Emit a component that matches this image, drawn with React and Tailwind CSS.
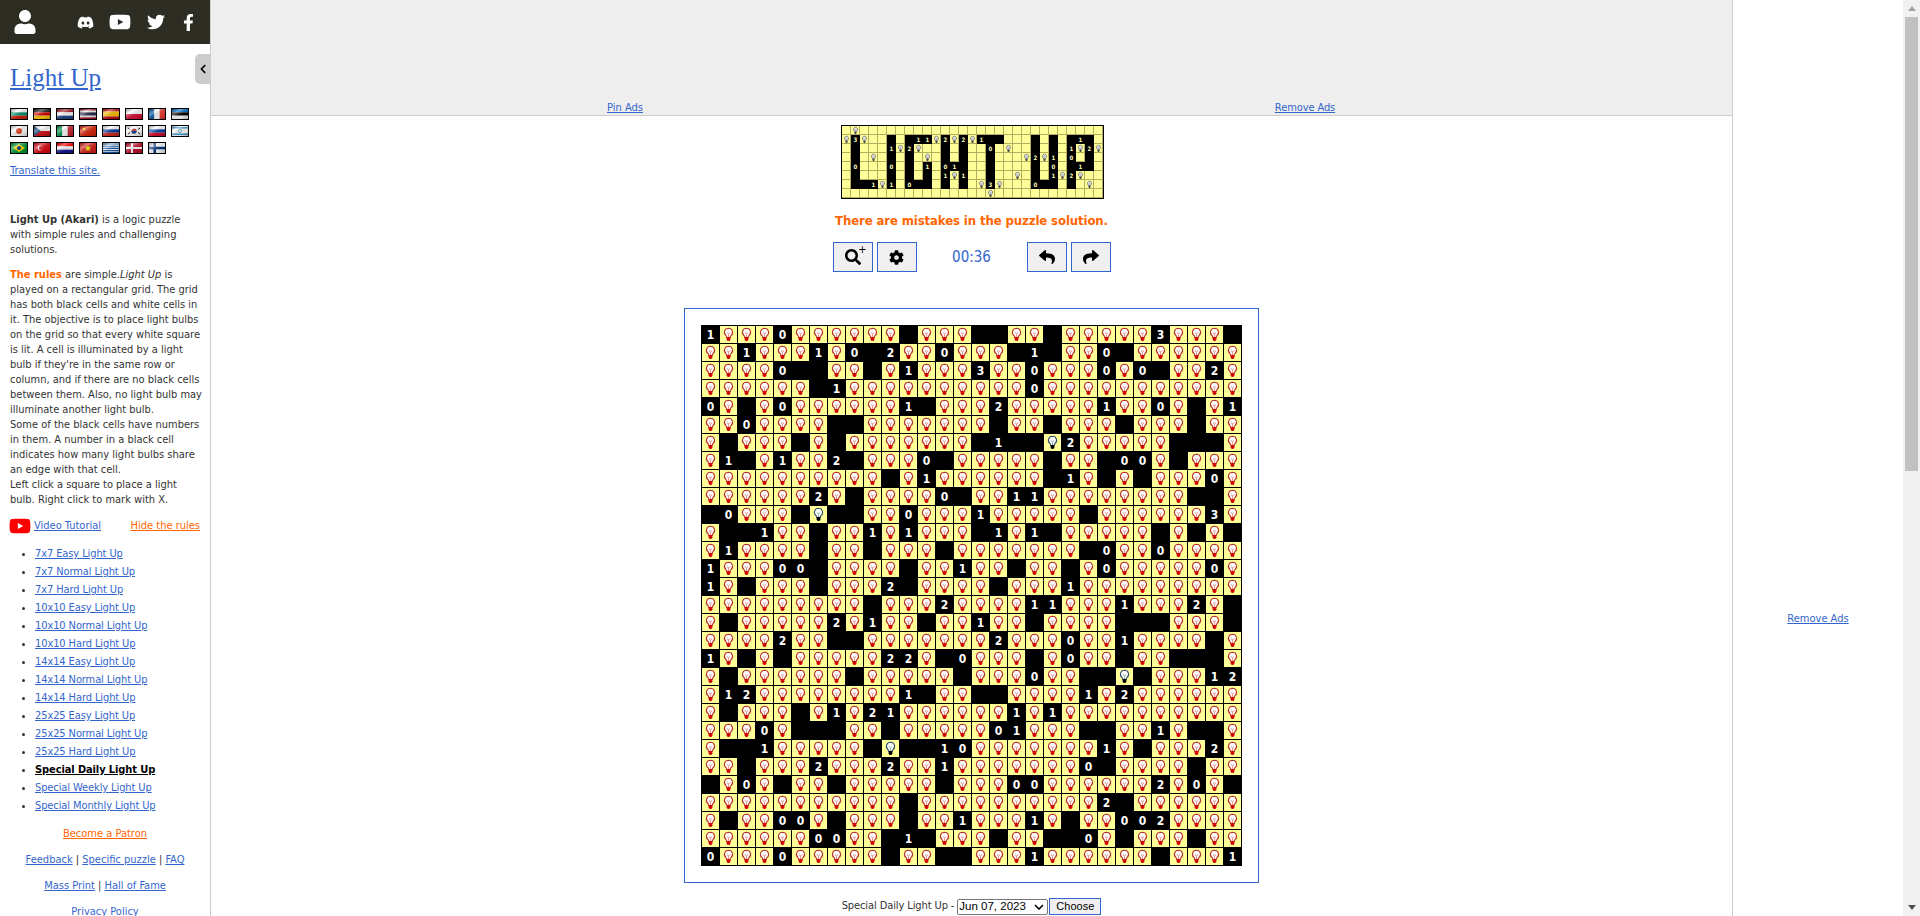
import { FaUser, FaDiscord, FaYoutube, FaTwitter, FaFacebookF, FaChevronLeft, FaSearch, FaCog, FaReply, FaShare } from 'react-icons/fa';

const board = [
  '1...0......#...##..#.....3...#',
  '..1...1.0#2..0...#1#..0#......',
  '....0##..#.1...3..0...0.0#..2.',
  '......#1..........0...........',
  '0.#.0......1#...2.....1..0.#.1',
  '..0....##.......#..#...#...#..',
  '.#...#.#.......#1##o2.....###.',
  '.1#.1..2#...0#.....#..#00.#...',
  '..........#.1......#1.#.#...0.',
  '......2.#....0#..11........##.',
  '#0...#o##..0...1.....#......3.',
  '.##1..#..1.1...#1.1#.....#.#.#',
  '.1....#..#...#.......#0..0....',
  '1...00#....#..1..#..#.0.....0.',
  '1.#...#...2#....#...1.........',
  '.........#...2....11...1...2.#',
  '.#.....2.1..#..1..#....###...#',
  '....2..##.......2...0..1....#.',
  '1.#.#.....22.#0...#.0..#..###.',
  '.#......#.....#...0..##o#...12',
  '.12........1#..##....1.2......',
  '.#...#.1.21......1.1..........',
  '...0.###..#.....01...##..1.##.',
  '.##1.....#o##10.......1.#...2.',
  '..#...2...2..1.......0#....#..',
  '#.0.#..#.....#...00......2.0.#',
  '...........#..........2#......',
  '.#..00.#...#..1...1.#..002....',
  '......00..#1#...#..##0.#...#..',
  '0...0.....#..##...1......#...1',
];

const logo = [
  '.b...........................',
  'b3b..#.#11b2b2b1##...#.#.#1#.',
  '.#...1b2b..#.#..0.b..#.#.1b2b',
  '.#.b.#.#.b.#.#..#...b2b1.0.#.',
  '.0...0.#.1.01#..#....#.0.#1#.',
  '.#...#.#.#.1b1..#..b.#.1b2b..',
  '.##1b1.0##.#.#.b3b...0##.#.b.',
  '................b............',
];

const levels = [
  '7x7 Easy Light Up', '7x7 Normal Light Up', '7x7 Hard Light Up',
  '10x10 Easy Light Up', '10x10 Normal Light Up', '10x10 Hard Light Up',
  '14x14 Easy Light Up', '14x14 Normal Light Up', '14x14 Hard Light Up',
  '25x25 Easy Light Up', '25x25 Normal Light Up', '25x25 Hard Light Up',
  'Special Daily Light Up', 'Special Weekly Light Up', 'Special Monthly Light Up',
];

function Bulb({ outline = '#b8352d', base = '#d00808', filament = '#e08a7c', fill = '#fff', size = 17 }) {
  return (
    <svg width={size} height={size} viewBox="0 0 17 17" className="block">
      <path d="M8.5 2.3a4.1 4.1 0 0 0-2.4 7.4c.5.4.7 1 .7 1.8h3.4c0-.8.2-1.4.7-1.8a4.1 4.1 0 0 0-2.4-7.4z" fill={fill} stroke={outline} strokeWidth="1.1" />
      <path d="M7.2 6.3l1.3 2.2 1.3-2.2M8.5 8.5v3" fill="none" stroke={filament} strokeWidth=".9" />
      <path d="M6.6 11h3.8v2.6l-1 1.4H7.6l-1-1.4z" fill={base} />
    </svg>
  );
}

function Cell({ value }) {
  if (value === '.') {
    return <div className="h-[17px] w-[17px] bg-[#ffff99]"><Bulb /></div>;
  }
  if (value === 'o') {
    return <div className="h-[17px] w-[17px] bg-[#ffff99]"><Bulb outline="#35506b" base="#000" filament="#8aa" /></div>;
  }
  return (
    <div className="flex h-[17px] w-[17px] items-center justify-center bg-black text-[12px] font-bold leading-none text-white">
      {value === '#' ? '' : value}
    </div>
  );
}

function LogoCell({ value }) {
  if (value === '.' || value === 'b') {
    return (
      <div className="h-[9px] w-[9px] border-r border-b border-[#b5ae5e] bg-[#ffff99]">
        {value === 'b' ? <Bulb outline="#555" base="#444" filament="#999" fill="#ddd" size={9} /> : null}
      </div>
    );
  }
  return (
    <div className="flex h-[9px] w-[9px] items-center justify-center bg-black text-[6px] font-bold leading-none text-[#ffffc0]">
      {value === '#' ? '' : value}
    </div>
  );
}

const flags = [
  ['h', '#fff', '#00966e', '#d62612'],
  ['h', '#222', '#d00', '#fc0'],
  ['h', '#ae1c28', '#fff', '#21468b'],
  ['h', '#a51931', '#f4f5f8', '#2d2a4a', '#2d2a4a', '#f4f5f8', '#a51931'],
  ['h', '#c60b1e', '#ffc400', '#ffc400', '#c60b1e'],
  ['h', '#fff', '#dc143c'],
  ['v', '#0055a4', '#fff', '#ef4135'],
  ['h', '#0072ce', '#000', '#fff'],
  ['jp'],
  ['cz'],
  ['v', '#009246', '#fff', '#ce2b37'],
  ['cn'],
  ['h', '#fff', '#0039a6', '#d52b1e'],
  ['kr'],
  ['h', '#fff', '#0047ab', '#d80f2e'],
  ['il'],
  ['br'],
  ['tr'],
  ['h', '#ff0000', '#fff', '#171796'],
  ['vn'],
  ['gr'],
  ['dk'],
  ['fi'],
];

function Flag({ spec, id }) {
  const [kind, ...colors] = spec;
  return (
    <svg width="18" height="12" viewBox="0 0 16 10" preserveAspectRatio="none" className="block border border-black">
      <defs>
        <linearGradient id={`gloss${id}`} x1="0" x2="1" y1="0" y2="1">
          <stop offset="0" stopColor="#000" stopOpacity=".35" />
          <stop offset=".3" stopColor="#fff" stopOpacity=".4" />
          <stop offset=".65" stopColor="#000" stopOpacity=".1" />
          <stop offset="1" stopColor="#000" stopOpacity=".3" />
        </linearGradient>
      </defs>
      {kind === 'h' && colors.map((c, i) => (
        <rect key={i} x="0" y={(10 / colors.length) * i} width="16" height={10 / colors.length} fill={c} />
      ))}
      {kind === 'v' && colors.map((c, i) => (
        <rect key={i} x={(16 / colors.length) * i} y="0" width={16 / colors.length} height="10" fill={c} />
      ))}
      {kind === 'jp' && <><rect width="16" height="10" fill="#fff" /><circle cx="8" cy="5" r="3" fill="#e8401c" /></>}
      {kind === 'cz' && <><rect width="16" height="5" fill="#fff" /><rect y="5" width="16" height="5" fill="#d7141a" /><path d="M0 0l7 5-7 5z" fill="#11457e" /></>}
      {kind === 'cn' && <><rect width="16" height="10" fill="#de2910" /><circle cx="4" cy="3" r="1.3" fill="#ffde00" /></>}
      {kind === 'kr' && <><rect width="16" height="10" fill="#fff" /><circle cx="8" cy="5" r="2.6" fill="#cd2e3a" /><path d="M5.4 5a2.6 2.6 0 0 0 5.2 0z" fill="#0047a0" /><path d="M2 2l2 1.5M2 8l2-1.5M14 2l-2 1.5M14 8l-2-1.5" stroke="#222" strokeWidth="1" /></>}
      {kind === 'il' && <><rect width="16" height="10" fill="#fff" /><rect y="1" width="16" height="1.5" fill="#38a0d8" /><rect y="7.5" width="16" height="1.5" fill="#38a0d8" /><circle cx="8" cy="5" r="1.6" fill="none" stroke="#38a0d8" strokeWidth=".7" /></>}
      {kind === 'br' && <><rect width="16" height="10" fill="#009c3b" /><path d="M8 1l6 4-6 4-6-4z" fill="#ffdf00" /><circle cx="8" cy="5" r="2" fill="#002776" /></>}
      {kind === 'tr' && <><rect width="16" height="10" fill="#e30a17" /><circle cx="6" cy="5" r="2.5" fill="#fff" /><circle cx="6.8" cy="5" r="2" fill="#e30a17" /></>}
      {kind === 'vn' && <><rect width="16" height="10" fill="#da251d" /><path d="M8 2l.9 2.3h2.4l-1.9 1.5.7 2.4L8 6.8 5.9 8.2l.7-2.4-1.9-1.5h2.4z" fill="#ff0" /></>}
      {kind === 'gr' && <><rect width="16" height="10" fill="#fff" /><path d="M0 1h16M0 3.2h16M0 5.4h16M0 7.6h16M0 9.6h16" stroke="#0d5eaf" strokeWidth="1.1" /></>}
      {kind === 'dk' && <><rect width="16" height="10" fill="#c8102e" /><rect x="5" width="2" height="10" fill="#fff" /><rect y="4" width="16" height="2" fill="#fff" /></>}
      {kind === 'fi' && <><rect width="16" height="10" fill="#fff" /><rect x="4.5" width="2.5" height="10" fill="#003580" /><rect y="3.8" width="16" height="2.5" fill="#003580" /></>}
      <rect width="16" height="10" fill={`url(#gloss${id})`} />
    </svg>
  );
}

function ToolButton({ children }) {
  return (
    <button type="button" className="flex h-[30px] w-[40px] items-center justify-center border border-[#3366cc] bg-[#f0f0f0] text-black">
      {children}
    </button>
  );
}

function Sidebar() {
  return (
    <aside className="relative w-[211px] shrink-0 border-r border-[#ccc] text-[11px] leading-[15px] text-[#333]">
      <div className="flex h-[44px] items-center bg-[#2e2d24] pl-[13px] text-white">
        <FaUser size={24} />
        <FaDiscord size={17} className="ml-[40px]" />
        <FaYoutube size={22} className="ml-[15px]" />
        <FaTwitter size={18} className="ml-[16px]" />
        <FaFacebookF size={17} className="ml-[15px]" />
      </div>
      <div className="absolute top-[54px] right-0 flex h-[30px] w-[15px] items-center justify-center rounded-l-[5px] bg-[#ccc] text-black">
        <FaChevronLeft size={10} />
      </div>
      <div className="whitespace-nowrap px-[10px]">
        <h1 className="mt-[18px] font-['Liberation_Serif',serif] text-[25px] leading-[32px] text-[#3366cc] underline">Light Up</h1>
        <div className="mt-[14px] grid grid-cols-[repeat(8,18px)] gap-x-[5px] gap-y-[5px]">
          {flags.map((spec, index) => <Flag key={index} spec={spec} id={index} />)}
        </div>
        <a href="#" className="mt-[9px] inline-block text-[#3366cc] underline">Translate this site.</a>
        <p className="mt-[34px]">
          <b>Light Up (Akari)</b> is a logic puzzle<br />
          with simple rules and challenging<br />
          solutions.
        </p>
        <p className="mt-[10px]">
          <b className="text-[#ff6600]">The rules</b> are simple.<i>Light Up</i> is<br />
          played on a rectangular grid. The grid<br />
          has both black cells and white cells in<br />
          it. The objective is to place light bulbs<br />
          on the grid so that every white square<br />
          is lit. A cell is illuminated by a light<br />
          bulb if they're in the same row or<br />
          column, and if there are no black cells<br />
          between them. Also, no light bulb may<br />
          illuminate another light bulb.<br />
          Some of the black cells have numbers<br />
          in them. A number in a black cell<br />
          indicates how many light bulbs share<br />
          an edge with that cell.<br />
          Left click a square to place a light<br />
          bulb. Right click to mark with X.
        </p>
        <div className="mt-[11px] flex items-center justify-between">
          <span className="flex items-center">
            <FaYoutube size={22} className="-my-1 -ml-[1px] text-[#f00]" />
            <a href="#" className="ml-[3px] text-[#3366cc] underline">Video Tutorial</a>
          </span>
          <a href="#" className="text-[#ff6600] underline">Hide the rules</a>
        </div>
        <ul className="mt-[12px] list-disc pl-[25px] leading-[18px] tracking-[-0.1px]">
          {levels.map((level) => (
            <li key={level}>
              <a href="#" className={level === 'Special Daily Light Up' ? 'font-bold text-black underline' : 'text-[#3366cc] underline'}>{level}</a>
            </li>
          ))}
        </ul>
        <div className="mt-[6px] text-center leading-[26px]">
          <a href="#" className="text-[#ff6600] underline">Become a Patron</a>
          <div>
            <a href="#" className="text-[#3366cc] underline">Feedback</a> | <a href="#" className="text-[#3366cc] underline">Specific puzzle</a> | <a href="#" className="text-[#3366cc] underline">FAQ</a>
          </div>
          <div>
            <a href="#" className="text-[#3366cc] underline">Mass Print</a> | <a href="#" className="text-[#3366cc] underline">Hall of Fame</a>
          </div>
          <a href="#" className="text-[#3366cc] underline">Privacy Policy</a>
        </div>
      </div>
    </aside>
  );
}

function Main() {
  return (
    <main className="min-w-0 flex-1 text-[11px] text-[#333]">
      <div className="flex h-[116px] items-end justify-center border-b border-[#ccc] bg-[#eee] pr-[13px] leading-[14px]">
        <a href="#" className="w-[680px] text-center text-[#3366cc] underline">Pin Ads</a>
        <a href="#" className="w-[680px] text-center tracking-[-0.1px] text-[#3366cc] underline">Remove Ads</a>
      </div>
      <div className="flex flex-col items-center">
        <div className="mt-[9px] ml-[2px] grid grid-cols-[repeat(29,9px)] border border-black bg-black">
          {logo.join('').split('').map((value, index) => <LogoCell key={index} value={value} />)}
        </div>
        <p className="mt-[13px] text-[13px] font-bold leading-[18px] tracking-[-0.1px] text-[#ff6600]">There are mistakes in the puzzle solution.</p>
        <div className="mt-[12px] flex items-center">
          <div className="flex gap-[4px]">
            <ToolButton>
              <span className="relative">
                <FaSearch size={16} />
                <span className="absolute -top-[5px] -right-[6px] text-[11px] leading-none">+</span>
              </span>
            </ToolButton>
            <ToolButton><FaCog size={15} /></ToolButton>
          </div>
          <div className="w-[110px] text-center text-[15px] text-[#3366cc]">00:36</div>
          <div className="flex gap-[4px]">
            <ToolButton><FaReply size={16} /></ToolButton>
            <ToolButton><FaShare size={16} /></ToolButton>
          </div>
        </div>
        <div className="mt-[36px] border border-[#3366cc] p-[16px]">
          <div className="grid grid-cols-[repeat(30,17px)] gap-px bg-black p-px">
            {board.join('').split('').map((value, index) => <Cell key={index} value={value} />)}
          </div>
        </div>
        <div className="mt-[15px] flex items-center">
          <span className="tracking-[-0.1px]">Special Daily Light Up -</span>
          <span className="relative ml-[3px] block">
            <select className="block h-[16px] w-[91px] appearance-none rounded-[2px] border border-[#767676] bg-white pl-[1px] font-['Liberation_Sans',sans-serif] text-[11.5px] leading-none text-black">
              <option>Jun 07, 2023</option>
            </select>
            <svg width="10" height="6" viewBox="0 0 10 6" className="absolute top-[5px] right-[4px]">
              <path d="M1 1l4 4 4-4" fill="none" stroke="#000" strokeWidth="1.6" />
            </svg>
          </span>
          <button type="button" className="ml-[1px] h-[17px] w-[52px] border border-[#3366cc] bg-[#f0f0f0] font-['Liberation_Sans',sans-serif] text-[11px] leading-none text-black">Choose</button>
        </div>
      </div>
    </main>
  );
}

function Scrollbar() {
  return (
    <div className="flex w-[17px] shrink-0 flex-col bg-[#f1f1f1]">
      <div className="flex h-[17px] items-center justify-center">
        <svg width="8" height="5" viewBox="0 0 8 5"><path d="M4 0l4 5H0z" fill="#a3a3a3" /></svg>
      </div>
      <div className="mx-[2px] h-[454px] bg-[#c1c1c1]" />
      <div className="flex-1" />
      <div className="flex h-[17px] items-center justify-center">
        <svg width="8" height="5" viewBox="0 0 8 5"><path d="M4 5l4-5H0z" fill="#505050" /></svg>
      </div>
    </div>
  );
}

export default function App() {
  return (
    <div className="flex h-[916px] overflow-hidden bg-white font-['DejaVu_Sans',sans-serif] font-stretch-condensed">
      <Sidebar />
      <Main />
      <div className="w-[171px] shrink-0 border-l border-[#ccc] pt-[611px] text-center text-[11px]">
        <a href="#" className="text-[#3366cc] underline">Remove Ads</a>
      </div>
      <Scrollbar />
    </div>
  );
}
